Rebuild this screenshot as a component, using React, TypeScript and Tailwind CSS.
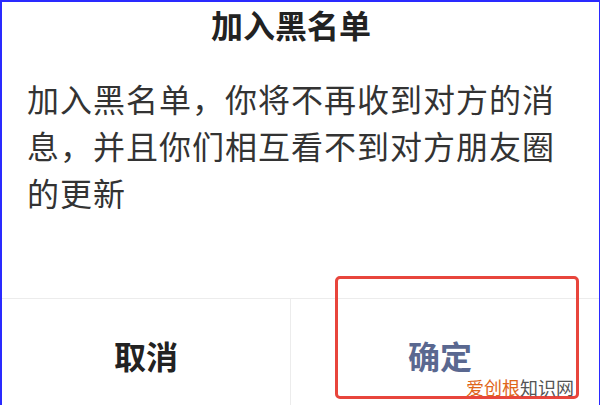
import React from 'react';

const cjk = { fontFamily: '"Noto Sans CJK SC", "Noto Sans", sans-serif' };

const App: React.FC = () => {
    return (
        <div
            className="relative w-[600px] h-[405px] overflow-hidden bg-white border-l-2 border-t-2 border-r border-[#2a2aff] flex flex-col"
            style={cjk}
        >
            {/* Title */}
            <div className="h-[44px] leading-[44px] pr-[19px] text-center text-[32px] font-bold text-[#222]">
                加入黑名单
            </div>

            {/* Message */}
            <p className="mt-[29px] pl-[25px] w-[575px] text-[32px] leading-[47px] tracking-[1px] text-[#333]">
                加入黑名单，你将不再收到对方的消息，并且你们相互看不到对方朋友圈的更新
            </p>

            <div className="flex-1" />

            {/* Buttons */}
            <div className="h-[107px] flex border-t border-[#ececec] text-[32px] font-bold">
                <div className="w-[289px] pt-[6px] flex items-center justify-center border-r border-[#ececec] text-[#222]">
                    取消
                </div>
                <div className="flex-1 pt-[6px] pr-[10px] flex items-center justify-center text-[#5a6890]">
                    确定
                </div>
            </div>

            {/* Annotation box */}
            <div className="absolute left-[333px] top-[274px] w-[244px] h-[123px] border-[3px] border-[#e8453c] rounded-[5px]" />

            {/* Watermark */}
            <div className="absolute left-[464px] top-[373px] text-[18px] leading-[24px] whitespace-nowrap">
                <span className="text-[#e0661a]">爱创根</span>
                <span className="text-[#555]">知识网</span>
            </div>
        </div>
    );
};

export default App;
